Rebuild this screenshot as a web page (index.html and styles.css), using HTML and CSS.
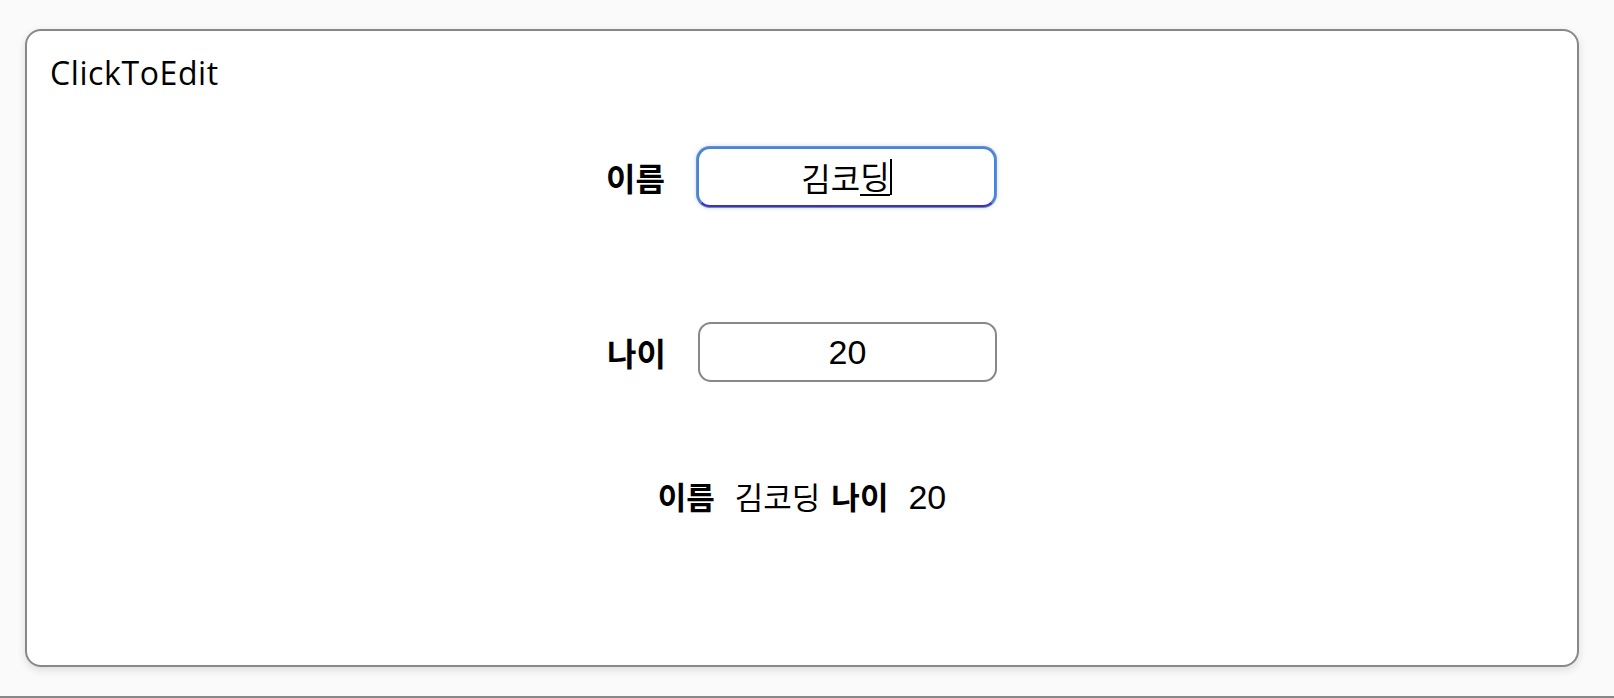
FILE: index.html
```html
<!DOCTYPE html>
<html lang="ko">
<head>
  <meta charset="UTF-8">
  <meta name="viewport" content="width=device-width, initial-scale=1.0">
  <title>ClickToEdit</title>
  <link rel="stylesheet" href="styles.css">
</head>
<body>
  <div class="page">
    <div class="card">
      <h2 class="card-title">ClickToEdit</h2>
      <div class="edit-area">
        <div class="edit-row">
          <label class="edit-label">이름</label>
          <div class="edit-field focused">김코<span class="composing">딩</span><span class="caret"></span></div>
        </div>
        <div class="edit-row">
          <label class="edit-label" for="ageInput">나이</label>
          <input class="edit-field" type="text" id="ageInput" value="20">
        </div>
        <div class="summary">
          <b>이름</b><span>김코딩</span><b>나이</b><span class="num">20</span>
        </div>
      </div>
    </div>
  </div>
</body>
</html>
```

FILE: styles.css
```css
body {
  margin: 0;
  background: #fafafa;
  font-family: "Noto Sans CJK KR", "Noto Sans", sans-serif;
}

.page {
  height: 698px;
  box-sizing: border-box;
  padding: 29px 35px 0 25px;
  border-bottom: 2px solid #888;
}

.card {
  height: 638px;
  box-sizing: border-box;
  background: #fff;
  border: 2px solid #888;
  border-radius: 16px;
  box-shadow: 0 3px 8px rgba(0, 0, 0, 0.12);
  padding: 20px 23px;
}

.card-title {
  margin: 0;
  font-family: "Open Sans", sans-serif;
  font-weight: 400;
  font-size: 32px;
  letter-spacing: 0.6px;
  line-height: 44px;
  color: #000;
}

.edit-area {
  display: flex;
  flex-direction: column;
  align-items: center;
  padding-top: 52px;
}

.edit-row {
  display: flex;
  align-items: center;
  gap: 32px;
  margin-bottom: 115px;
}

.edit-row:first-child {
  margin-left: -2px;
}

.edit-label {
  font-weight: 700;
  font-size: 32px;
  color: #000;
}

.edit-field {
  width: 299px;
  height: 60px;
  box-sizing: border-box;
  border: 2px solid #888;
  border-radius: 13px;
  background: #fff;
  font-family: "Liberation Sans", "Noto Sans CJK KR", sans-serif;
  font-size: 34px;
  text-align: center;
  color: #000;
  outline: none;
  padding: 0;
}

.edit-field.focused {
  display: flex;
  align-items: center;
  justify-content: center;
  font-family: "Noto Sans CJK KR", sans-serif;
  font-size: 32px;
  border-color: #3d86ec;
  border-bottom-color: #3b2fc4;
  box-shadow: 0 0 0 1px #7d8aa3, 0 0 5px rgba(60, 130, 240, 0.45);
}

.composing {
  border-bottom: 2px solid #000;
  line-height: 1.1;
}

.caret {
  width: 2px;
  height: 36px;
  background: #000;
}

.summary {
  display: flex;
  align-items: baseline;
  font-size: 31px;
  color: #000;
  margin-top: -24px;
}

.summary b {
  margin-right: 20px;
}

.summary span {
  margin-right: 11px;
}

.summary .num {
  font-family: "Liberation Sans", sans-serif;
  font-size: 34px;
  margin-right: 0;
}
```
